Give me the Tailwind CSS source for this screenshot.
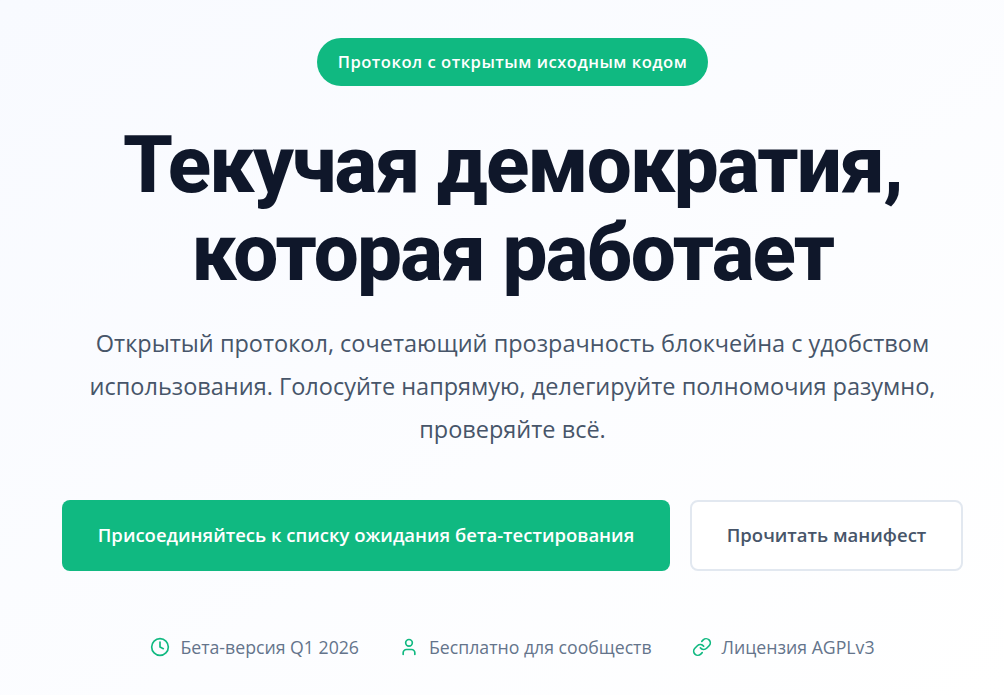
<!DOCTYPE html>
<html lang="ru">
<head>
<meta charset="utf-8">
<script src="https://cdn.jsdelivr.net/npm/@tailwindcss/browser@4"></script>
</head>
<body class="m-0 overflow-hidden">
<main class="w-[1004px] h-[695px] flex flex-col items-center bg-gradient-to-br from-[#f8faff] to-[#ffffff] font-['Open_Sans','Noto_Sans',sans-serif] pt-[38px] pl-[21px]">
  <div class="h-[48px] w-[391px] flex items-center justify-center rounded-full bg-[#10b981] text-white text-[16.6px] font-semibold tracking-[0.5px]">Протокол с открытым исходным кодом</div>
  <h1 class="mt-[35px] text-center text-[#0f172a] text-[80px] leading-[88px] font-['Roboto',sans-serif] font-extrabold tracking-[-1.8px] whitespace-nowrap">Текучая демократия,<br>которая работает</h1>
  <p class="mt-[25px] w-[880px] text-center text-[#475569] text-[23.5px] leading-[43.2px]">Открытый протокол, сочетающий прозрачность блокчейна с удобством использования. Голосуйте напрямую, делегируйте полномочия разумно, проверяйте всё.</p>
  <div class="mt-[48px] flex gap-[20px]">
    <a class="w-[608px] h-[71px] flex items-center justify-center rounded-[8px] bg-[#10b981] text-white text-[18.5px] font-semibold">Присоединяйтесь к списку ожидания бета-тестирования</a>
    <a class="w-[273px] h-[71px] flex items-center justify-center rounded-[8px] border-2 border-[#e2e8f0] bg-white text-[#475569] text-[18.5px] font-semibold">Прочитать манифест</a>
  </div>
  <div class="mt-[63px] flex items-center gap-[40px] text-[#64748b] text-[17.7px]">
    <div class="flex items-center gap-[10px]">
      <svg class="w-[20px] h-[20px] text-[#10b981]" viewBox="0 0 24 24" fill="none" stroke="currentColor" stroke-width="2" stroke-linecap="round" stroke-linejoin="round"><circle cx="12" cy="12" r="10"/><path d="M12 6v6l4 2"/></svg>
      <span>Бета-версия Q1 2026</span>
    </div>
    <div class="flex items-center gap-[10px]">
      <svg class="w-[20px] h-[20px] text-[#10b981]" viewBox="0 0 24 24" fill="none" stroke="currentColor" stroke-width="2" stroke-linecap="round" stroke-linejoin="round"><path d="M19 21v-2a4 4 0 0 0-4-4H9a4 4 0 0 0-4 4v2"/><circle cx="12" cy="7" r="4"/></svg>
      <span>Бесплатно для сообществ</span>
    </div>
    <div class="flex items-center gap-[10px]">
      <svg class="w-[20px] h-[20px] text-[#10b981]" viewBox="0 0 24 24" fill="none" stroke="currentColor" stroke-width="2" stroke-linecap="round" stroke-linejoin="round"><path d="M10 13a5 5 0 0 0 7.54.54l3-3a5 5 0 0 0-7.07-7.07l-1.72 1.71"/><path d="M14 11a5 5 0 0 0-7.54-.54l-3 3a5 5 0 0 0 7.07 7.07l1.71-1.71"/></svg>
      <span>Лицензия AGPLv3</span>
    </div>
  </div>
</main>
</body>
</html>
